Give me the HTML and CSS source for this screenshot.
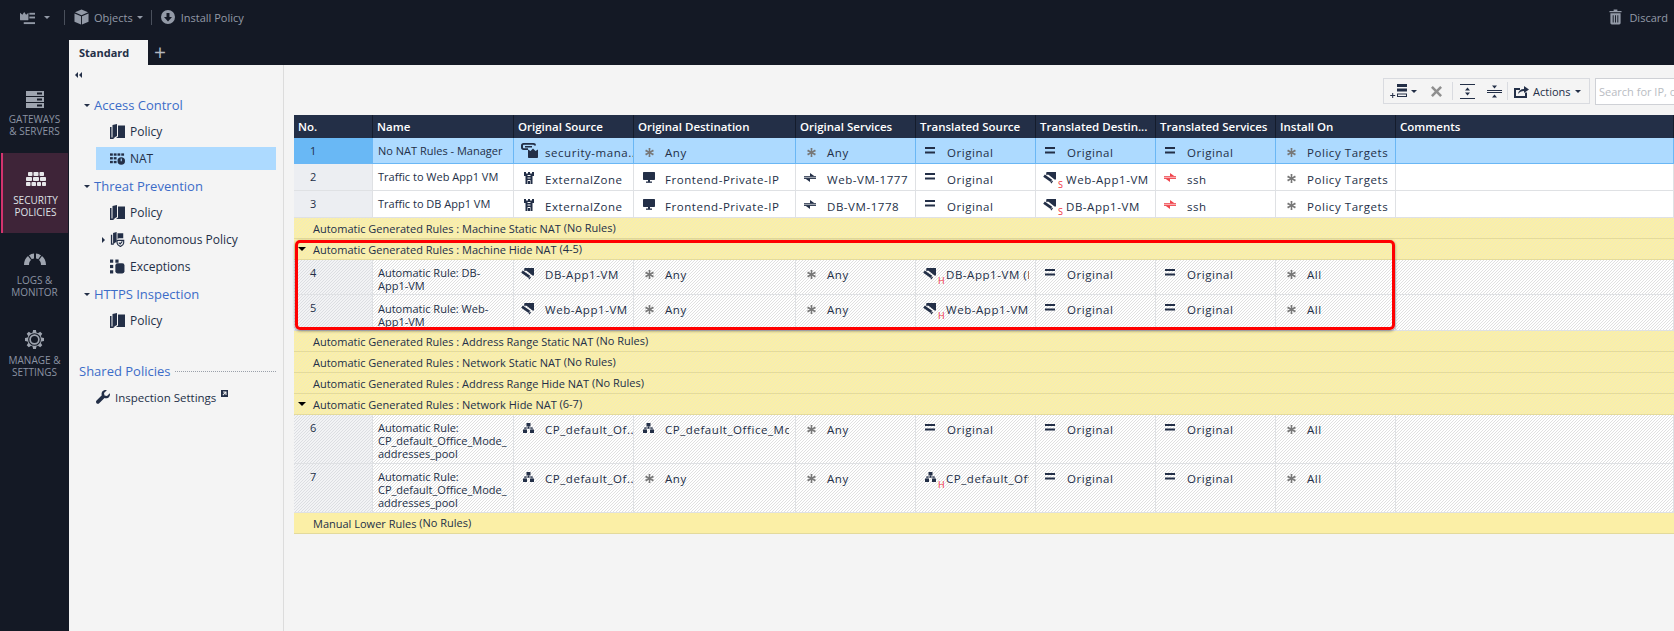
FILE: index.html
```html
<!DOCTYPE html>
<html lang="en">
<head>
    <meta charset="UTF-8" />
    <title>SmartConsole - NAT Policy</title>
    <link rel="stylesheet" href="styles.css">
</head>
<body>
    <svg class="defs" xmlns="http://www.w3.org/2000/svg">
        <symbol id="i-console" viewBox="0 0 18 16"><path d="M1 3l2.500 2L5.500 2l2 3L10 3v7c0 .6-.4 1-1 1H2c-.6 0-1-.4-1-1z"/><rect x="0" y="0" width="0" height="0"/><rect x="11" y="3" width="6" height="2"/><rect x="11" y="7" width="6" height="2"/><rect x="5" y="13" width="12" height="2"/></symbol>
        <symbol id="i-cube" viewBox="0 0 16 16"><path d="M8 0l7 3-7 3-7-3z"/><path d="M.5 4.200l7 3V16l-7-3z"/><path d="M15.500 4.200l-7 3V16l7-3z"/></symbol>
        <symbol id="i-install" viewBox="0 0 14 14"><path fill-rule="evenodd" d="M7 0a7 7 0 1 1 0 14A7 7 0 0 1 7 0zM5.500 3v4H3l4 4.500L11 7H8.500V3z"/></symbol>
        <symbol id="i-trash" viewBox="0 0 14 16"><path d="M5 0h4v1.500h4.500V3H.5V1.500H5z"/><path fill-rule="evenodd" d="M1.500 4h11v10.500c0 .8-.7 1.500-1.500 1.500H3c-.8 0-1.500-.7-1.500-1.500zM4 6v8h1V6zm2.500 0v8h1V6zM9 6v8h1V6z"/></symbol>
        <symbol id="i-servers" viewBox="0 0 18 17"><path fill-rule="evenodd" d="M0 0h18v5H0zm11 1.500v2h5v-2zM0 6h18v5H0zm11 1.500v2h5v-2zM0 12h18v5H0zm11 1.500v2h5v-2z"/></symbol>
        <symbol id="i-bricks" viewBox="0 0 20 14"><rect x="2" y="0" width="4.500" height="4" rx=".8"/><rect x="7.500" y="0" width="5" height="4" rx=".8"/><rect x="13.500" y="0" width="4.500" height="4" rx=".8"/><rect x="0" y="5" width="6" height="4" rx=".8"/><rect x="7" y="5" width="6" height="4" rx=".8"/><rect x="14" y="5" width="6" height="4" rx=".8"/><rect x="0" y="10" width="4.500" height="4" rx=".8"/><rect x="5.500" y="10" width="4.500" height="4" rx=".8"/><rect x="11" y="10" width="4" height="4" rx=".8"/><rect x="16" y="10" width="4" height="4" rx=".8"/></symbol>
        <symbol id="i-gauge" viewBox="0 0 22 13"><path d="M0 12C0 8 1.500 5 4 3l3 4c-1.300 1-2 2.800-2 5z"/><path d="M5 2.300C6.500 1.200 8.200.5 10 .4v5c-.8.100-1.600.400-2.200.800z"/><path d="M12 .4c1.800.100 3.500.800 5 1.900l-2.800 3.900c-.6-.4-1.400-.7-2.200-.8z"/><path d="M18 3c2.500 2 4 5 4 9h-5c0-2.200-.7-4-2-5z"/></symbol>
        <symbol id="i-gear" viewBox="0 0 20 20"><path fill-rule="evenodd" d="M8.500 0h3l.5 2.700 1.600.7L16 1.800 18.200 4l-1.600 2.400.7 1.600 2.700.5v3l-2.700.5-.7 1.600 1.600 2.400-2.200 2.200-2.400-1.600-1.600.7-.5 2.700h-3L8 17.300l-1.600-.7L4 18.200 1.800 16l1.600-2.400-.7-1.600L0 11.500v-3L2.700 8l.7-1.600L1.800 4 4 1.800l2.400 1.600L8 2.700zM10 3.300a6.700 6.700 0 1 0 0 13.400 6.700 6.700 0 0 0 0-13.400zm0 1.200a5.500 5.500 0 1 1 0 11 5.500 5.500 0 0 1 0-11zm0 1.800a3.700 3.700 0 1 0 0 7.400 3.700 3.700 0 0 0 0-7.400z"/></symbol>
        <symbol id="i-book" viewBox="0 0 15 15"><path d="M0 3h1.500v10.500H5L3 15H0z"/><path d="M2.500 1L7 0v12l-4.500 2.500z"/><path d="M8 1.500h7V14H6l2-1.500z"/></symbol>
        <symbol id="i-nat" viewBox="0 0 16 12"><rect x="0" y="0" width="3" height="2.500"/><rect x="4" y="0" width="3" height="2.500"/><rect x="8" y="0" width="3" height="2.500"/><rect x="12" y="0" width="3" height="2.500"/><rect x="0" y="4" width="3" height="2.500"/><rect x="4" y="4" width="3" height="2.500"/><rect x="0" y="8" width="3" height="2.500"/><rect x="4" y="8" width="3" height="2.500"/><path fill-rule="evenodd" d="M12 4a4 4 0 1 1 0 8 4 4 0 0 1 0-8zm-.6 1.500V8.500h1.200V5.500z"/></symbol>
        <symbol id="i-auto" viewBox="0 0 15 17"><path d="M0 3h1.500v10H4l-1 1.500H0z"/><path d="M2.500 1L6.500 0v11l-4 2.500z"/><path d="M7.500 1.500H14V7H9l-1.500 1z"/><path fill="none" stroke="currentColor" stroke-width="1.300" d="M7 9.500h7.500v3c0 2-3.700 4-3.700 4S7 14.500 7 12.500z"/><path fill="none" stroke="currentColor" stroke-width="1.300" d="M9 12l1.500 1.500 2.500-3"/></symbol>
        <symbol id="i-except" viewBox="0 0 14 13"><rect x="0" y="0" width="3" height="3"/><rect x="5" y="0" width="3" height="3"/><rect x="0" y="5" width="3" height="3"/><rect x="0" y="10" width="3" height="3"/><rect x="5" y="3.500" width="8.500" height="9.500" rx="2"/></symbol>
        <symbol id="i-wrench" viewBox="0 0 14 14"><path d="M13.800 3.200L11 6 8.500 5.500 8 3 10.800.2C8.800-.5 6.800.5 6 2c-.5 1-.6 2.200-.2 3.300L.6 10.500c-.8.800-.8 1.900-.1 2.700.8.800 2 .8 2.700.1l5.300-5.200c1.200.4 2.300.3 3.300-.2 1.600-.8 2.600-2.700 2-4.700z"/></symbol>
        <symbol id="i-ext" viewBox="0 0 7 7"><path fill-rule="evenodd" d="M0 0h7v7H0zm2 1.500v1h1.800L1.500 4.800l.7.700 2.300-2.300V5h1V1.500z"/></symbol>
        <symbol id="i-manager" viewBox="0 0 17 15"><path d="M2.500 0h10C14 0 15 .8 15 2.500h-2c0-.4-.3-.7-.7-.7H3C2.400 1.800 2 2.200 2 2.800v1.700c0 .4.300.7.700.7H7V7H2.500C1 7 0 6 0 4.500v-2C0 1 1 0 2.500 0z"/><rect x="4" y="3" width="7" height="1.500"/><path d="M7 6.500l2.500 1.500L12 5.500l2.500 2.500L17 6.500V14c0 .6-.4 1-1 1H8c-.6 0-1-.4-1-1z"/></symbol>
        <symbol id="i-zone" viewBox="0 0 10 12"><path fill-rule="evenodd" d="M0 0h2v1.500h2V0h2v1.500h2V0h2v4H8.500v8H6.500V8h-3v4h-2V4H0zM3.500 3v1h3V3zm0 2.500v1h3v-1zM4 9v3h2V9z"/></symbol>
        <symbol id="i-host" viewBox="0 0 12 11"><path d="M1 0h10c.6 0 1 .4 1 1v6c0 .6-.4 1-1 1H1C.4 8 0 7.600 0 7V1C0 .4.400 0 1 0z"/><rect x="5" y="8" width="2" height="2"/><rect x="3" y="9.500" width="6" height="1.300"/></symbol>
        <symbol id="i-svc" viewBox="0 0 12 9"><path d="M0 3.200h12v1.100H0z"/><path d="M0 5.200h12v1.100H0z" transform="translate(0 -.4)"/><path d="M6 0l4.500 3.200H6z"/><path d="M6 9L1.500 5.800H6z"/></symbol>
        <symbol id="i-eq" viewBox="0 0 10 7"><rect width="10" height="2"/><rect y="4.500" width="10" height="2"/></symbol>
        <symbol id="i-any" viewBox="0 0 9 9"><path d="M3.600 0h1.800l-.2 3.200L8 1.600l.9 1.600-2.900 1.300 2.900 1.300L8 7.400 5.200 5.800 5.400 9H3.600l.2-3.200L1 7.400.1 5.800 3 4.500.1 3.200 1 1.600l2.800 1.600z"/></symbol>
        <symbol id="i-vm" viewBox="0 0 13 12"><path d="M3.500 0H13v7.500h-1.500L5.500 2.800H3z"/><path d="M1.800 2.500l7.400 5.300-1.600 2.200L.2 4.700z"/><path d="M7.500 10.700L9 8.600 10 9.300 8.500 11.400z"/></symbol>
        <symbol id="i-net" viewBox="0 0 11 10"><rect x="3.500" y="0" width="4" height="3.500"/><rect x="5" y="3.500" width="1" height="2"/><rect x="1.500" y="4.500" width="8" height="1"/><rect x="1.500" y="4.500" width="1" height="2"/><rect x="8.500" y="4.500" width="1" height="2"/><rect x="0" y="6.500" width="4" height="3.500"/><rect x="7" y="6.500" width="4" height="3.500"/></symbol>
        <symbol id="i-newrule" viewBox="0 0 17 14"><rect x="7" y="0" width="10" height="3"/><rect x="7" y="4.500" width="10" height="3"/><path fill-rule="evenodd" d="M7 9.500h10V13H7zm1 1v1.500h8v-1.500z"/><path d="M2.200 9h1v2h2v1h-2v2h-1v-2h-2v-1h2z"/></symbol>
        <symbol id="i-close" viewBox="0 0 11 11"><path d="M1.800 0L5.500 3.700 9.200 0 11 1.800 7.300 5.500 11 9.200 9.200 11 5.500 7.300 1.800 11 0 9.200 3.700 5.500 0 1.800z"/></symbol>
        <symbol id="i-expand" viewBox="0 0 15 15"><rect width="15" height="1"/><rect y="14" width="15" height="1"/><path d="M7.500 3.500L10 6.500H5z"/><path d="M7.500 11.500L5 8.500h5z"/></symbol>
        <symbol id="i-collapse" viewBox="0 0 15 15"><rect y="6" width="15" height="1"/><rect y="8" width="15" height="1"/><path d="M7.500 4.500L5 1.500h5z"/><path d="M7.500 10.500L10 13.500H5z"/></symbol>
        <symbol id="i-actions" viewBox="0 0 15 13"><path d="M0 3h6v2H2v6h9V7.500h2V13H0z"/><path d="M4 9c.3-3 2.500-5 6-5V1l5 3.500L10 8V6C7.500 6 5.500 7 4 9z"/></symbol>
    </svg>

    <header class="topbar">
        <div class="topbar-row">
            <svg class="ico-console"><use href="#i-console"/></svg>
            <span class="caret caret-first"></span>
            <span class="top-sep"></span>
            <svg class="ico-cube"><use href="#i-cube"/></svg>
            <span class="top-label">Objects</span>
            <span class="caret"></span>
            <span class="top-sep"></span>
            <svg class="ico-install"><use href="#i-install"/></svg>
            <span class="top-label">Install Policy</span>
            <span class="top-spacer"></span>
            <svg class="ico-trash"><use href="#i-trash"/></svg>
            <span class="top-label">Discard</span>
        </div>
        <div class="tabs">
            <div class="tab">Standard</div>
            <div class="tab-add">+</div>
        </div>
    </header>

    <div class="main">
        <nav class="sidebar">
            <a class="side-item">
                <svg class="ico-servers"><use href="#i-servers"/></svg>
                <span class="side-text tight">Gateways<br>&amp; Servers</span>
            </a>
            <a class="side-item active">
                <svg class="ico-bricks"><use href="#i-bricks"/></svg>
                <span class="side-text">Security<br>Policies</span>
            </a>
            <a class="side-item">
                <svg class="ico-gauge"><use href="#i-gauge"/></svg>
                <span class="side-text">Logs &amp;<br>Monitor</span>
            </a>
            <a class="side-item">
                <svg class="ico-gear"><use href="#i-gear"/></svg>
                <span class="side-text tight">Manage &amp;<br>Settings</span>
            </a>
        </nav>

        <aside class="tree">
            <div class="tree-collapse"><span></span><span></span></div>
            <div class="tree-head"><span class="tree-arrow"></span>Access Control</div>
            <div class="tree-item"><svg class="ico-book"><use href="#i-book"/></svg>Policy</div>
            <div class="tree-item selected"><svg class="ico-nat"><use href="#i-nat"/></svg>NAT</div>
            <div class="tree-head"><span class="tree-arrow"></span>Threat Prevention</div>
            <div class="tree-item"><svg class="ico-book"><use href="#i-book"/></svg>Policy</div>
            <div class="tree-item"><span class="tree-more"></span><svg class="ico-book"><use href="#i-auto"/></svg>Autonomous Policy</div>
            <div class="tree-item"><svg class="ico-book"><use href="#i-except"/></svg>Exceptions</div>
            <div class="tree-head"><span class="tree-arrow"></span>HTTPS Inspection</div>
            <div class="tree-item"><svg class="ico-book"><use href="#i-book"/></svg>Policy</div>
            <div class="shared-head">Shared Policies<span class="leader"></span></div>
            <div class="shared-item">
                <svg class="ico-wrench"><use href="#i-wrench"/></svg>Inspection Settings
                <svg class="ico-ext"><use href="#i-ext"/></svg>
            </div>
        </aside>

        <section class="content">
            <div class="toolbar">
                <div class="tool-group">
                    <svg class="ico-newrule"><use href="#i-newrule"/></svg>
                    <span class="caret dark"></span>
                    <svg class="ico-close"><use href="#i-close"/></svg>
                    <span class="tool-sep"></span>
                    <svg class="ico-expand"><use href="#i-expand"/></svg>
                    <svg class="ico-expand"><use href="#i-collapse"/></svg>
                    <span class="tool-sep"></span>
                    <svg class="ico-actions"><use href="#i-actions"/></svg>
                    <span class="tool-label">Actions</span>
                    <span class="caret dark"></span>
                </div>
                <input class="search" type="text" placeholder="Search for IP, object, action, ...">
            </div>

            <div class="rulebase">
                <div class="row head">
                    <div>No.</div><div>Name</div><div>Original Source</div><div>Original Destination</div><div>Original Services</div><div>Translated Source</div><div>Translated Destin...</div><div>Translated Services</div><div>Install On</div><div>Comments</div>
                </div>

                <div class="row rule h26 picked">
                    <div class="no">1</div>
                    <div class="name">No NAT Rules - Manager</div>
                    <div class="cell"><svg class="ic manager"><use href="#i-manager"/></svg>security-mana...</div>
                    <div class="cell"><svg class="ic any"><use href="#i-any"/></svg>Any</div>
                    <div class="cell"><svg class="ic any"><use href="#i-any"/></svg>Any</div>
                    <div class="cell"><svg class="ic eq"><use href="#i-eq"/></svg>Original</div>
                    <div class="cell"><svg class="ic eq"><use href="#i-eq"/></svg>Original</div>
                    <div class="cell"><svg class="ic eq"><use href="#i-eq"/></svg>Original</div>
                    <div class="cell"><svg class="ic any"><use href="#i-any"/></svg>Policy Targets</div>
                    <div class="cell"></div>
                </div>
                <div class="row rule h27">
                    <div class="no">2</div>
                    <div class="name">Traffic to Web App1 VM</div>
                    <div class="cell"><svg class="ic zone"><use href="#i-zone"/></svg>ExternalZone</div>
                    <div class="cell"><svg class="ic host"><use href="#i-host"/></svg>Frontend-Private-IP</div>
                    <div class="cell"><svg class="ic svc"><use href="#i-svc"/></svg>Web-VM-1777</div>
                    <div class="cell"><svg class="ic eq"><use href="#i-eq"/></svg>Original</div>
                    <div class="cell shifted"><svg class="ic vm"><use href="#i-vm"/></svg><span class="mark">S</span>Web-App1-VM</div>
                    <div class="cell"><svg class="ic svc red"><use href="#i-svc"/></svg>ssh</div>
                    <div class="cell"><svg class="ic any"><use href="#i-any"/></svg>Policy Targets</div>
                    <div class="cell"></div>
                </div>
                <div class="row rule h27">
                    <div class="no">3</div>
                    <div class="name">Traffic to DB App1 VM</div>
                    <div class="cell"><svg class="ic zone"><use href="#i-zone"/></svg>ExternalZone</div>
                    <div class="cell"><svg class="ic host"><use href="#i-host"/></svg>Frontend-Private-IP</div>
                    <div class="cell"><svg class="ic svc"><use href="#i-svc"/></svg>DB-VM-1778</div>
                    <div class="cell"><svg class="ic eq"><use href="#i-eq"/></svg>Original</div>
                    <div class="cell shifted"><svg class="ic vm"><use href="#i-vm"/></svg><span class="mark">S</span>DB-App1-VM</div>
                    <div class="cell"><svg class="ic svc red"><use href="#i-svc"/></svg>ssh</div>
                    <div class="cell"><svg class="ic any"><use href="#i-any"/></svg>Policy Targets</div>
                    <div class="cell"></div>
                </div>

                <div class="section h22">Automatic Generated Rules : Machine Static NAT <span class="paren">(No Rules)</span></div>
                <div class="section h22 open">Automatic Generated Rules : Machine Hide NAT <span class="paren">(4-5)</span></div>

                <div class="row rule h35 auto">
                    <div class="no">4</div>
                    <div class="name">Automatic Rule: DB-App1-VM</div>
                    <div class="cell"><svg class="ic vm"><use href="#i-vm"/></svg>DB-App1-VM</div>
                    <div class="cell"><svg class="ic any"><use href="#i-any"/></svg>Any</div>
                    <div class="cell"><svg class="ic any"><use href="#i-any"/></svg>Any</div>
                    <div class="cell shifted"><svg class="ic vm"><use href="#i-vm"/></svg><span class="mark">H</span><span class="clip">DB-App1-VM (Hide)</span></div>
                    <div class="cell"><svg class="ic eq"><use href="#i-eq"/></svg>Original</div>
                    <div class="cell"><svg class="ic eq"><use href="#i-eq"/></svg>Original</div>
                    <div class="cell"><svg class="ic any"><use href="#i-any"/></svg>All</div>
                    <div class="cell"></div>
                </div>
                <div class="row rule h36 auto">
                    <div class="no">5</div>
                    <div class="name">Automatic Rule: Web-App1-VM</div>
                    <div class="cell"><svg class="ic vm"><use href="#i-vm"/></svg>Web-App1-VM</div>
                    <div class="cell"><svg class="ic any"><use href="#i-any"/></svg>Any</div>
                    <div class="cell"><svg class="ic any"><use href="#i-any"/></svg>Any</div>
                    <div class="cell shifted"><svg class="ic vm"><use href="#i-vm"/></svg><span class="mark">H</span><span class="clip">Web-App1-VM (Hide)</span></div>
                    <div class="cell"><svg class="ic eq"><use href="#i-eq"/></svg>Original</div>
                    <div class="cell"><svg class="ic eq"><use href="#i-eq"/></svg>Original</div>
                    <div class="cell"><svg class="ic any"><use href="#i-any"/></svg>All</div>
                    <div class="cell"></div>
                </div>

                <div class="section">Automatic Generated Rules : Address Range Static NAT <span class="paren">(No Rules)</span></div>
                <div class="section">Automatic Generated Rules : Network Static NAT <span class="paren">(No Rules)</span></div>
                <div class="section">Automatic Generated Rules : Address Range Hide NAT <span class="paren">(No Rules)</span></div>
                <div class="section h22 open">Automatic Generated Rules : Network Hide NAT <span class="paren">(6-7)</span></div>

                <div class="row rule h49 auto">
                    <div class="no">6</div>
                    <div class="name">Automatic Rule: CP_default_Office_Mode_<br>addresses_pool</div>
                    <div class="cell"><svg class="ic net"><use href="#i-net"/></svg>CP_default_Of...</div>
                    <div class="cell"><svg class="ic net"><use href="#i-net"/></svg><span class="clip">CP_default_Office_Mode</span></div>
                    <div class="cell"><svg class="ic any"><use href="#i-any"/></svg>Any</div>
                    <div class="cell"><svg class="ic eq"><use href="#i-eq"/></svg>Original</div>
                    <div class="cell"><svg class="ic eq"><use href="#i-eq"/></svg>Original</div>
                    <div class="cell"><svg class="ic eq"><use href="#i-eq"/></svg>Original</div>
                    <div class="cell"><svg class="ic any"><use href="#i-any"/></svg>All</div>
                    <div class="cell"></div>
                </div>
                <div class="row rule h49 auto">
                    <div class="no">7</div>
                    <div class="name">Automatic Rule: CP_default_Office_Mode_<br>addresses_pool</div>
                    <div class="cell"><svg class="ic net"><use href="#i-net"/></svg>CP_default_Of...</div>
                    <div class="cell"><svg class="ic any"><use href="#i-any"/></svg>Any</div>
                    <div class="cell"><svg class="ic any"><use href="#i-any"/></svg>Any</div>
                    <div class="cell shifted"><svg class="ic net"><use href="#i-net"/></svg><span class="mark">H</span><span class="clip">CP_default_Office_Mode</span></div>
                    <div class="cell"><svg class="ic eq"><use href="#i-eq"/></svg>Original</div>
                    <div class="cell"><svg class="ic eq"><use href="#i-eq"/></svg>Original</div>
                    <div class="cell"><svg class="ic any"><use href="#i-any"/></svg>All</div>
                    <div class="cell"></div>
                </div>

                <div class="section manual">Manual Lower Rules <span class="paren">(No Rules)</span></div>

                <div class="callout"></div>
            </div>
        </section>
    </div>
</body>
</html>
```

FILE: styles.css
```css
* {
    box-sizing: border-box;
}

html, body {
    margin: 0;
    padding: 0;
    height: 631px;
    overflow: hidden;
}

body {
    font-family: "Open Sans", sans-serif;
    font-size: 11px;
    color: #232f47;
    background-color: #f4f4f4;
    display: flex;
    flex-direction: column;
}

svg {
    fill: currentColor;
    flex: none;
}

.defs {
    display: none;
}

/* top bar */

.topbar {
    background-color: #141925;
    height: 65px;
    flex: none;
    color: #939aa7;
}

.topbar-row {
    height: 40px;
    padding: 0 6px 6px 19px;
    display: flex;
    align-items: center;
}

.top-label {
    font-size: 11px;
    margin-left: 5px;
}

.top-sep {
    width: 1px;
    height: 15px;
    background-color: #4a505c;
    margin: 0 9px 0 8px;
}

.top-spacer {
    flex: 1;
}

.caret {
    width: 0;
    height: 0;
    border-left: 3px solid transparent;
    border-right: 3px solid transparent;
    border-top: 3px solid currentColor;
    margin-left: 4px;
}

.caret-first {
    margin-left: 8px;
    margin-right: 6px;
}

.caret.dark {
    color: #232f47;
}

.ico-console { width: 17px; height: 15px; }
.ico-cube { width: 15px; height: 16px; }
.ico-install { width: 14px; height: 14px; margin-right: 1px; }
.ico-trash { width: 13px; height: 16px; margin-right: 2px; }

.tabs {
    height: 25px;
    margin-left: 69px;
    display: flex;
}

.tab {
    width: 79px;
    background-color: #f4f4f4;
    color: #232f47;
    font-weight: 700;
    font-size: 11px;
    line-height: 25px;
    padding-left: 10px;
}

.tab-add {
    color: #b4b8c0;
    font-size: 21px;
    line-height: 24px;
    margin-left: 6px;
}

.main {
    flex: 1;
    display: flex;
    min-height: 0;
}

/* left navigation */

.sidebar {
    width: 69px;
    flex: none;
    background-color: #141925;
    padding-top: 8px;
}

.side-item {
    height: 80px;
    margin-left: 1px;
    margin-right: 1px;
    display: flex;
    flex-direction: column;
    align-items: center;
    color: #8b93a3;
    font-size: 10px;
    line-height: 12px;
    text-align: center;
    text-transform: uppercase;
}

.side-item svg {
    color: #9ea4af;
}

.side-text {
    margin-top: 8px;
}

.side-text.tight {
    margin-top: 5px;
}

.side-item.active {
    background-color: #3e2438;
    border-left: 2px solid #d3336e;
    color: #dfe1e6;
}

.side-item.active svg {
    color: #e6e7ea;
}

.ico-servers { width: 18px; height: 17px; margin-top: 18px; }
.ico-bricks { width: 20px; height: 14px; margin-top: 19px; }
.ico-gauge { width: 22px; height: 13px; margin-top: 20px; }
.ico-gear { width: 19px; height: 19px; margin-top: 17px; }

/* policy tree */

.tree {
    width: 215px;
    flex: none;
    height: 100%;
    padding: 4px 7px 0 6px;
    border-right: 1px solid #dcdcdc;
}

.tree-collapse {
    display: flex;
    gap: 1px;
    height: 22px;
    padding-top: 3px;
}

.tree-collapse span {
    width: 0;
    height: 0;
    border-top: 3px solid transparent;
    border-bottom: 3px solid transparent;
    border-right: 3px solid #232f47;
}

.tree-head {
    display: flex;
    align-items: center;
    height: 27px;
    padding-left: 19px;
    font-size: 13px;
    color: #3c6cc8;
    position: relative;
}

.tree-arrow {
    position: absolute;
    left: 9px;
    top: 13px;
    border-left: 3px solid transparent;
    border-right: 3px solid transparent;
    border-top: 3px solid #232f47;
}

.tree-item {
    display: flex;
    align-items: center;
    height: 27px;
    margin-left: 21px;
    padding-left: 14px;
    font-size: 12px;
    color: #232f47;
    position: relative;
}

.tree-item.selected {
    height: 23px;
    margin-top: 2px;
    margin-bottom: 2px;
    background-color: #addaff;
}

.tree-more {
    position: absolute;
    left: 6px;
    top: 11px;
    border-top: 3px solid transparent;
    border-bottom: 3px solid transparent;
    border-left: 3px solid #232f47;
}

.ico-book { width: 15px; height: 15px; margin-right: 5px; }
.ico-nat { width: 15px; height: 12px; margin-right: 5px; }

.shared-head {
    display: flex;
    align-items: center;
    margin-top: 27px;
    height: 20px;
    padding-left: 4px;
    font-size: 13px;
    color: #3c6cc8;
}

.leader {
    flex: 1;
    margin-left: 5px;
    border-top: 1px dotted #9aa0aa;
}

.shared-item {
    display: flex;
    align-items: center;
    height: 24px;
    margin-top: 4px;
    padding-left: 21px;
    font-size: 11.5px;
}

.ico-wrench { width: 14px; height: 14px; margin-right: 5px; }
.ico-ext { width: 7px; height: 7px; margin: -8px 0 0 5px; }

/* toolbar over the table */

.content {
    flex: 1;
    min-width: 0;
    padding-left: 10px;
}

.toolbar {
    height: 50px;
    padding-top: 13px;
    display: flex;
    justify-content: flex-end;
    gap: 5px;
    margin-right: -80px;
}

.tool-group {
    width: 207px;
    height: 26px;
    border: 1px solid #d9dbe0;
    display: flex;
    align-items: center;
    padding-left: 6px;
    flex: none;
}

.tool-sep {
    width: 1px;
    height: 18px;
    background-color: #d9dbe0;
}

.tool-label {
    font-size: 11px;
    margin-left: 4px;
}

.ico-newrule { width: 17px; height: 14px; }
.ico-close { width: 11px; height: 11px; margin: 0 10px 0 14px; color: #8f8f8f; }
.ico-expand { width: 15px; height: 15px; margin-left: 7px; margin-right: 5px; }
.ico-actions { width: 15px; height: 13px; margin-left: 6px; }

.search {
    width: 159px;
    height: 27px;
    flex: none;
    border: 1px solid #cfd1d6;
    padding: 0 3px;
    font-family: "Open Sans", sans-serif;
    font-size: 11px;
    background-color: #fff;
}

.search::placeholder {
    color: #b9bcc2;
}

/* rule table */

.rulebase {
    position: relative;
}

.row {
    display: grid;
    grid-template-columns: 79px 141px 120px 162px 120px 120px 120px 120px 120px 1fr;
}

.head {
    height: 23px;
    background-color: #232f47;
    color: #fff;
    font-weight: 600;
    font-size: 11.5px;
    line-height: 24px;
}

.head > div {
    padding-left: 4px;
    border-right: 1px solid #141c2c;
    white-space: nowrap;
    overflow: hidden;
}

.rule {
    background-color: #fff;
    border-bottom: 1px solid #dfe1e4;
    line-height: 13px;
}

.rule > div {
    overflow: hidden;
    border-right: 1px solid #dfe1e4;
}

.h22 { height: 22px; }
.h26 { height: 26px; }
.h27 { height: 27px; }
.h35 { height: 35px; }
.h36 { height: 36px; }
.h49 { height: 49px; }

.no {
    background-color: #eceef2;
    padding: 6px 0 0 16px;
}

.name {
    padding: 6px 4px 0 5px;
}

.h36 .name {
    padding-top: 7px;
}

.cell {
    display: flex;
    align-items: flex-start;
    padding: 8px 6px 0 31px;
    font-size: 11.5px;
    letter-spacing: 0.55px;
    white-space: nowrap;
    position: relative;
}

.shifted {
    padding-left: 30px;
}

.clip {
    display: block;
    min-width: 0;
    overflow: hidden;
}

.h27 .cell {
    padding-top: 9px;
}

.picked {
    background-color: #addaff;
    border-bottom-color: #6ab7f5;
}

.picked > div {
    border-right-color: #6ab7f5;
}

.picked .no {
    background-color: #69b8f5;
}

/* hatch of 3px across, so it stays on the pixel grid */

.auto {
    background: repeating-linear-gradient(-45deg, #fff 0 1.06px, #e0e0e0 1.06px 2.121px);
}

.auto .no {
    background: repeating-linear-gradient(-45deg, #f2f3f5 0 1.06px, #dcdee2 1.06px 2.121px);
}

/* cell icons sit in the gutter on the left of the text */

.ic {
    position: absolute;
    left: 0;
    top: 0;
}

.ic.any { left: 11px; top: 10px; width: 9px; height: 9px; color: #777; }
.ic.eq { left: 9px; top: 9px; width: 10px; height: 7px; color: #232f47; }
.ic.manager { left: 7px; top: 5px; width: 17px; height: 15px; }
.ic.zone { left: 10px; top: 8px; width: 10px; height: 12px; }
.ic.host { left: 9px; top: 8px; width: 12px; height: 11px; }
.ic.svc { left: 8px; top: 9px; width: 12px; height: 9px; }
.ic.svc.red { color: #f0444c; }
.ic.vm { left: 7px; top: 8px; width: 13px; height: 12px; }
.ic.net { left: 9px; top: 8px; width: 11px; height: 10px; }

.mark {
    position: absolute;
    left: 22px;
    top: 16px;
    font-size: 9px;
    line-height: 10px;
    letter-spacing: 0;
    color: #f0303c;
}

.section {
    height: 21px;
    padding-left: 19px;
    line-height: 21px;
    background: repeating-linear-gradient(-45deg, #fbf0a6 0 1.06px, #f1e9bb 1.06px 2.121px);
    border-bottom: 1px solid #e3da9c;
    white-space: nowrap;
    position: relative;
}

.section.open::before {
    content: "";
    position: absolute;
    left: 4px;
    top: 8px;
    border-left: 4px solid transparent;
    border-right: 4px solid transparent;
    border-top: 4px solid #000;
}

.section.manual {
    background: #fbefa6;
}

.paren {
    position: relative;
    top: -1px;
}

/* hand-drawn highlight over the machine hide NAT rows */

.callout {
    position: absolute;
    left: 1px;
    top: 125px;
    width: 1100px;
    height: 90px;
    border: 3px solid #f00;
    border-radius: 5px;
    box-shadow: 0 1px 3px rgba(0, 0, 0, 0.45);
    pointer-events: none;
}
```
